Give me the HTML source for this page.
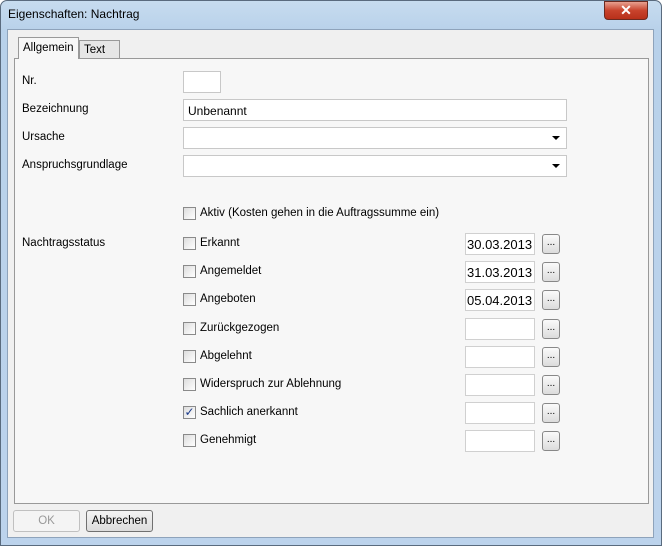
<!DOCTYPE html>
<html><head><style>
*{box-sizing:border-box;margin:0;padding:0}
body{width:662px;height:546px;overflow:hidden;background:#fff;font-family:"Liberation Sans",sans-serif;font-size:11.5px;color:#000;position:relative}
.frame{position:absolute;left:0;top:0;width:662px;height:546px;border-radius:7px 7px 0 0;background:linear-gradient(#c7dcef,#b8d1ea 30px,#bcd3ec);border:1px solid #5a6b7e}
.title{position:absolute;left:8px;top:7px;font-size:12px}
.close{position:absolute;left:604px;top:1px;width:44px;height:19px;border-radius:0 0 4px 4px;background:linear-gradient(#e8a090,#c8432c 50%,#b8301a);border:1px solid #6b2a20;color:#fff;font-weight:bold;text-align:center;line-height:17px;font-size:14px}
.client{position:absolute;left:7px;top:29px;width:647px;height:509px;background:#f0f0f0;border:1px solid #8ea3bb}
.panel{position:absolute;left:14px;top:58px;width:635px;height:446px;background:#f7f7f7;border:1px solid #999}
.tab{position:absolute;border:1px solid #999;border-bottom:none;background:#f7f7f7;padding:4px 4px}
.lbl{position:absolute;left:22px}
.inp{position:absolute;background:#fff;border:1px solid #c8c8c8;height:22px;padding:4px 4px;font-size:12px}
.cb{position:absolute;left:183px;width:13px;height:13px;border:1px solid #8a8a8a;background:linear-gradient(135deg,#ddd,#fff)}
.cbl{position:absolute;left:200px}
.date{position:absolute;left:465px;width:70px;height:22px;background:#fff;border:1px solid #d0d0d0;font-size:13px;padding:3px 0 0 1px}
.dot{position:absolute;left:542px;width:18px;height:20px;border:1px solid #888;border-radius:3px;background:linear-gradient(#fafafa,#dcdcdc);font-size:10px;text-align:center;line-height:16px}
.btn{position:absolute;top:510px;width:67px;height:22px;border:1px solid #707070;border-radius:3px;background:linear-gradient(#f4f4f4,#dcdcdc);text-align:center;line-height:20px}
.arr{position:absolute;right:6px;top:8px;border-left:4px solid transparent;border-right:4px solid transparent;border-top:4px solid #000}
</style></head><body>
<div class="frame"></div>
<div class="title">Eigenschaften: Nachtrag</div>
<div class="close">✕</div>
<div class="client"></div>
<div class="panel"></div>
<div class="tab" style="left:79px;top:40px;width:41px;height:18px;background:#e6e6e6;padding:3px 4px">Text</div>
<div class="tab" style="left:18px;top:37px;width:61px;height:22px;z-index:2">Allgemein</div>
<div class="lbl" style="top:75px">Nr.</div>
<div class="lbl" style="top:103px">Bezeichnung</div>
<div class="lbl" style="top:131px">Ursache</div>
<div class="lbl" style="top:159px">Anspruchsgrundlage</div>
<div class="lbl" style="top:237px">Nachtragsstatus</div>
<div class="inp" style="left:183px;top:71px;width:38px"></div>
<div class="inp" style="left:183px;top:99px;width:384px">Unbenannt</div>
<div class="inp" style="left:183px;top:127px;width:384px"><div class="arr"></div></div>
<div class="inp" style="left:183px;top:155px;width:384px"><div class="arr"></div></div>
<div class="cb" style="top:207px"></div><div class="cbl" style="top:207px">Aktiv (Kosten gehen in die Auftragssumme ein)</div>

<div class="cb" style="top:237px"></div><div class="cbl" style="top:237px">Erkannt</div>
<div class="date" style="top:233px">30.03.2013</div><div class="dot" style="top:234px">...</div>
<div class="cb" style="top:265px"></div><div class="cbl" style="top:265px">Angemeldet</div>
<div class="date" style="top:261px">31.03.2013</div><div class="dot" style="top:262px">...</div>
<div class="cb" style="top:293px"></div><div class="cbl" style="top:293px">Angeboten</div>
<div class="date" style="top:289px">05.04.2013</div><div class="dot" style="top:290px">...</div>
<div class="cb" style="top:322px"></div><div class="cbl" style="top:322px">Zurückgezogen</div>
<div class="date" style="top:318px"></div><div class="dot" style="top:319px">...</div>
<div class="cb" style="top:350px"></div><div class="cbl" style="top:350px">Abgelehnt</div>
<div class="date" style="top:346px"></div><div class="dot" style="top:347px">...</div>
<div class="cb" style="top:378px"></div><div class="cbl" style="top:378px">Widerspruch zur Ablehnung</div>
<div class="date" style="top:374px"></div><div class="dot" style="top:375px">...</div>
<div class="cb" style="top:406px;font-size:12px;line-height:10px;color:#1a3a8a;text-align:center">✓</div><div class="cbl" style="top:406px">Sachlich anerkannt</div>
<div class="date" style="top:402px"></div><div class="dot" style="top:403px">...</div>
<div class="cb" style="top:434px"></div><div class="cbl" style="top:434px">Genehmigt</div>
<div class="date" style="top:430px"></div><div class="dot" style="top:431px">...</div>

<div class="btn" style="left:13px;color:#999;border-color:#c0c0c0;background:#f4f4f4">OK</div>
<div class="btn" style="left:86px">Abbrechen</div>
</body></html>
